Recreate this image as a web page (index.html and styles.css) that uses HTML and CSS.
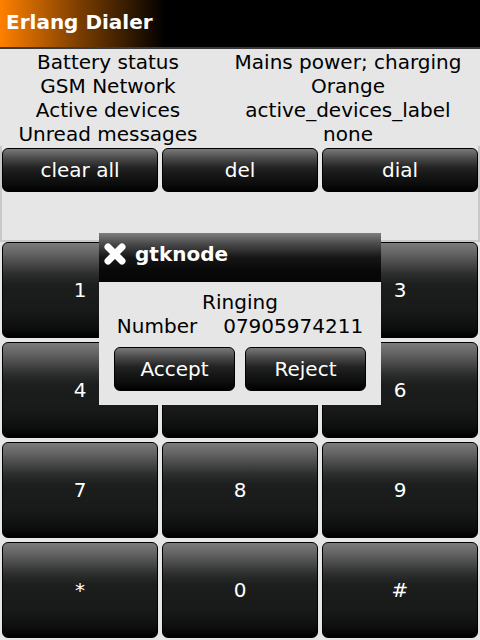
FILE: index.html
```html
<!DOCTYPE html>
<html>
<head>
<meta charset="utf-8">
<title>Erlang Dialer</title>
<link rel="stylesheet" href="styles.css">
</head>
<body>
<div class="app">
  <header class="titlebar">Erlang Dialer</header>
  <section class="info">
    <div class="cell">Battery status</div><div class="cell">Mains power; charging</div>
    <div class="cell">GSM Network</div><div class="cell">Orange</div>
    <div class="cell">Active devices</div><div class="cell">active_devices_label</div>
    <div class="cell">Unread messages</div><div class="cell">none</div>
  </section>
  <section class="frame">
    <div class="actions">
      <div class="btn small">clear all</div>
      <div class="btn small">del</div>
      <div class="btn small">dial</div>
    </div>
    <div class="display"></div>
  </section>
  <section class="keypad">
    <div class="btn key">1</div><div class="btn key">2</div><div class="btn key">3</div>
    <div class="btn key">4</div><div class="btn key">5</div><div class="btn key">6</div>
    <div class="btn key">7</div><div class="btn key">8</div><div class="btn key">9</div>
    <div class="btn key">*</div><div class="btn key">0</div><div class="btn key">#</div>
  </section>

  <div class="dialog">
    <div class="dlg-title">
      <svg class="close" width="22" height="22" viewBox="0 0 22 22">
        <path d="M4 4 L18 18 M18 4 L4 18" stroke="#fff" stroke-width="7" stroke-linecap="round" fill="none"/>
      </svg>
      <span>gtknode</span>
    </div>
    <div class="dlg-body">
      <div class="dlg-line">Ringing</div>
      <div class="dlg-line number"><span>Number</span><span>07905974211</span></div>
      <div class="dlg-actions">
        <div class="btn small dlg-btn">Accept</div>
        <div class="btn small dlg-btn">Reject</div>
      </div>
    </div>
  </div>
</div>
</body>
</html>
```
FILE: styles.css
```css
html, body {
  margin: 0;
  padding: 0;
}
body {
  background: #e6e6e6;
  font-family: "DejaVu Sans", "Liberation Sans", sans-serif;
  font-size: 20px;
  color: #000;
}
.app {
  position: relative;
  width: 480px;
  height: 640px;
  overflow: hidden;
}
.titlebar {
  height: 44px;
  line-height: 44px;
  padding: 0 0 3px 6px;
  background: linear-gradient(to right, #ff8000 0px, #7a3d00 80px, #000 165px);
  border-bottom: 2px solid #3a3a3a;
  color: #fff;
  font-weight: bold;
}
.info {
  display: grid;
  grid-template-columns: 216px 264px;
  padding-top: 1px;
}
.cell {
  height: 24px;
  line-height: 24px;
  text-align: center;
  white-space: nowrap;
}
.frame {
  height: 94px;
  border: 2px solid #c9c9c9;
  border-top: 0;
  display: flex;
  flex-direction: column;
}
.actions {
  display: grid;
  grid-template-columns: repeat(3, 156px);
  gap: 4px;
  padding-top: 2px;
}
.btn {
  box-sizing: border-box;
  border: 1px solid #000;
  border-radius: 6px;
  background: linear-gradient(#7c7c7c 0%, #5a5a5a 15%, #2c2d2d 33%, #1c1e1e 45%, #181a1a 72%, #0d0e0e 90%, #000 100%);
  color: #fff;
  display: flex;
  align-items: center;
  justify-content: center;
  white-space: nowrap;
}
.small {
  height: 44px;
  background: linear-gradient(#7a7a7a 0%, #4e4e4e 20%, #222 45%, #161717 62%, #0b0b0b 85%, #000 100%);
}
.display {
  flex: 1;
}
.keypad {
  display: grid;
  grid-template-columns: repeat(3, 156px);
  grid-auto-rows: 96px;
  gap: 4px;
  padding: 0 2px 2px;
}
.dialog {
  position: absolute;
  left: 99px;
  top: 233px;
  width: 282px;
  height: 172px;
  background: #e6e6e6;
  display: flex;
  flex-direction: column;
}
.dlg-title {
  height: 42px;
  padding-bottom: 7px;
  background: linear-gradient(#7e7e7e 0%, #4a4a4a 22%, #161616 50%, #090909 75%, #050505 100%);
  color: #fff;
  font-weight: bold;
  display: flex;
  align-items: center;
  gap: 9px;
  padding-left: 5px;
}
.close {
  display: block;
}
.dlg-body {
  flex: 1;
  padding-top: 8px;
  display: flex;
  flex-direction: column;
  align-items: center;
}
.dlg-line {
  height: 24px;
  line-height: 24px;
  text-align: center;
}
.number {
  display: flex;
  gap: 26px;
}
.dlg-actions {
  display: flex;
  gap: 10px;
  margin-top: 9px;
}
.dlg-btn {
  width: 121px;
}
```
